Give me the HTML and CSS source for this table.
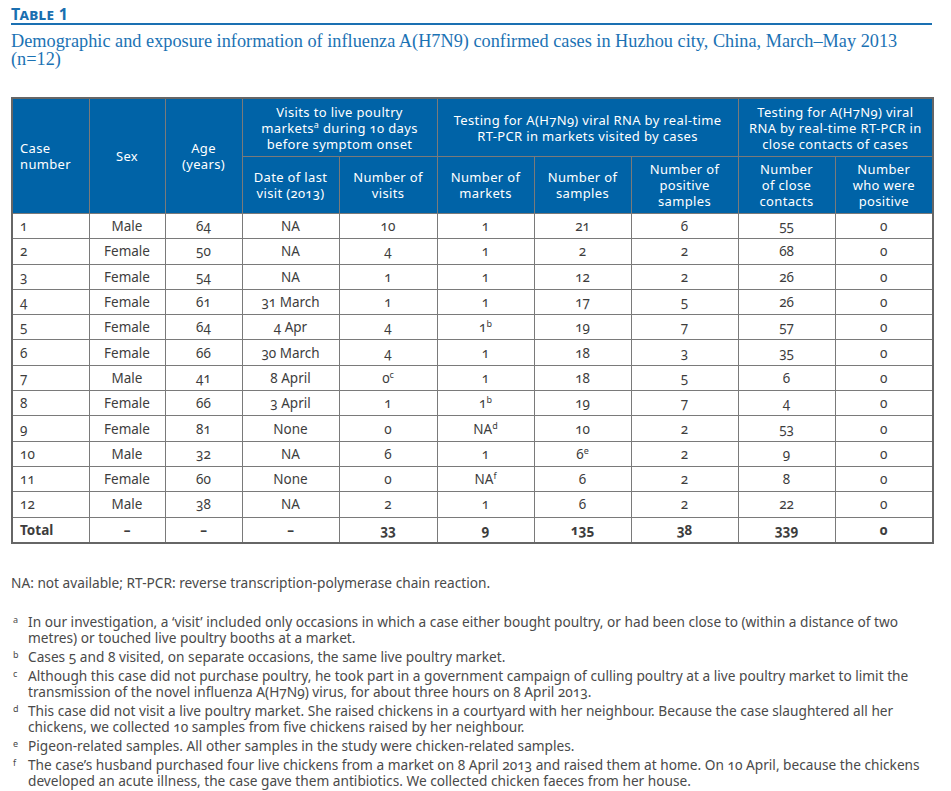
FILE: index.html
```html
<!DOCTYPE html>
<html>
<head>
<meta charset="utf-8">
<link rel="stylesheet" href="styles.css">
</head>
<body>
<div class="page">
  <h1 class="label">Table 1</h1>
  <p class="caption">Demographic and exposure information of influenza A(H7N9) confirmed cases in Huzhou city, China, March–May 2013 (n=12)</p>

  <table class="data">
    <colgroup>
      <col class="c77"><col class="c76"><col class="c77"><col class="c97"><col class="c98"><col class="c97"><col class="c97"><col class="c107"><col class="c97"><col class="c98">
    </colgroup>
    <thead>
      <tr class="h1">
        <th rowspan="2" class="left">Case<br>number</th>
        <th rowspan="2">Sex</th>
        <th rowspan="2">Age<br>(years)</th>
        <th colspan="2">Visits to live poultry<br>markets<sup>a</sup> during 10 days<br>before symptom onset</th>
        <th colspan="3">Testing for A(H7N9) viral RNA by real-time<br>RT-PCR in markets visited by cases</th>
        <th colspan="2">Testing for A(H7N9) viral<br>RNA by real-time RT-PCR in<br>close contacts of cases</th>
      </tr>
      <tr class="h2">
        <th>Date of last<br>visit (2013)</th>
        <th>Number of<br>visits</th>
        <th>Number of<br>markets</th>
        <th>Number of<br>samples</th>
        <th>Number of<br>positive<br>samples</th>
        <th>Number<br>of close<br>contacts</th>
        <th>Number<br>who were<br>positive</th>
      </tr>
    </thead>
    <tbody>
      <tr><td class="left">1</td><td>Male</td><td>64</td><td>NA</td><td>10</td><td>1</td><td>21</td><td>6</td><td>55</td><td>0</td></tr>
      <tr><td class="left">2</td><td>Female</td><td>50</td><td>NA</td><td>4</td><td>1</td><td>2</td><td>2</td><td>68</td><td>0</td></tr>
      <tr><td class="left">3</td><td>Female</td><td>54</td><td>NA</td><td>1</td><td>1</td><td>12</td><td>2</td><td>26</td><td>0</td></tr>
      <tr><td class="left">4</td><td>Female</td><td>61</td><td>31 March</td><td>1</td><td>1</td><td>17</td><td>5</td><td>26</td><td>0</td></tr>
      <tr><td class="left">5</td><td>Female</td><td>64</td><td>4 Apr</td><td>4</td><td>1<sup>b</sup></td><td>19</td><td>7</td><td>57</td><td>0</td></tr>
      <tr><td class="left">6</td><td>Female</td><td>66</td><td>30 March</td><td>4</td><td>1</td><td>18</td><td>3</td><td>35</td><td>0</td></tr>
      <tr><td class="left">7</td><td>Male</td><td>41</td><td>8 April</td><td>0<sup>c</sup></td><td>1</td><td>18</td><td>5</td><td>6</td><td>0</td></tr>
      <tr><td class="left">8</td><td>Female</td><td>66</td><td>3 April</td><td>1</td><td>1<sup>b</sup></td><td>19</td><td>7</td><td>4</td><td>0</td></tr>
      <tr><td class="left">9</td><td>Female</td><td>81</td><td>None</td><td>0</td><td>NA<sup>d</sup></td><td>10</td><td>2</td><td>53</td><td>0</td></tr>
      <tr><td class="left">10</td><td>Male</td><td>32</td><td>NA</td><td>6</td><td>1</td><td>6<sup>e</sup></td><td>2</td><td>9</td><td>0</td></tr>
      <tr><td class="left">11</td><td>Female</td><td>60</td><td>None</td><td>0</td><td>NA<sup>f</sup></td><td>6</td><td>2</td><td>8</td><td>0</td></tr>
      <tr><td class="left">12</td><td>Male</td><td>38</td><td>NA</td><td>2</td><td>1</td><td>6</td><td>2</td><td>22</td><td>0</td></tr>
      <tr class="total"><td class="left">Total</td><td>–</td><td>–</td><td>–</td><td>33</td><td>9</td><td>135</td><td>38</td><td>339</td><td>0</td></tr>
    </tbody>
  </table>

  <p class="abbr">NA: not available; RT-PCR: reverse transcription-polymerase chain reaction.</p>

  <ul class="notes">
    <li><span class="mark">a</span><span class="txt">In our investigation, a ‘visit’ included only occasions in which a case either bought poultry, or had been close to (within a distance of two metres) or touched live poultry booths at a market.</span></li>
    <li><span class="mark">b</span><span class="txt">Cases 5 and 8 visited, on separate occasions, the same live poultry market.</span></li>
    <li><span class="mark">c</span><span class="txt">Although this case did not purchase poultry, he took part in a government campaign of culling poultry at a live poultry market to limit the transmission of the novel influenza A(H7N9) virus, for about three hours on 8 April 2013.</span></li>
    <li><span class="mark">d</span><span class="txt">This case did not visit a live poultry market. She raised chickens in a courtyard with her neighbour. Because the case slaughtered all her chickens, we collected 10 samples from five chickens raised by her neighbour.</span></li>
    <li><span class="mark">e</span><span class="txt">Pigeon-related samples. All other samples in the study were chicken-related samples.</span></li>
    <li><span class="mark">f</span><span class="txt">The case’s husband purchased four live chickens from a market on 8 April 2013 and raised them at home. On 10 April, because the chickens developed an acute illness, the case gave them antibiotics. We collected chicken faeces from her house.</span></li>
  </ul>
</div>
</body>
</html>
```

FILE: styles.css
```css
html, body {
  margin: 0;
  padding: 0;
  background: #ffffff;
}

.page {
  padding: 6px 15px 0 11px;
  font-family: "Noto Sans", "Open Sans", sans-serif;
  font-variant-numeric: oldstyle-nums;
  color: #3d3d3d;
}

.label {
  margin: 0;
  font-size: 16px;
  line-height: 17px;
  font-weight: 700;
  font-variant: small-caps;
  letter-spacing: 0.3px;
  color: #1a6fb0;
  border-bottom: 2px solid #1a70b2;
  width: 921px;
}

.caption {
  margin: 7px 0 0 0;
  font-family: "Liberation Serif", "DejaVu Serif", serif;
  font-size: 18.3px;
  line-height: 18px;
  color: #1b72b4;
  width: 921px;
}

.data {
  margin-top: 29px;
  width: 921px;
  table-layout: fixed;
  border-collapse: collapse;
  border: 2px solid #666;
  font-size: 13.5px;
}

.c76 { width: 76px; }
.c77 { width: 77px; }
.c97 { width: 97px; }
.c98 { width: 98px; }
.c107 { width: 107px; }

.data th,
.data td {
  border: 1px solid #7a7a7a;
  text-align: center;
  vertical-align: middle;
  padding: 0 3px;
}

.data th {
  background: #0063a7;
  color: #ffffff;
  font-weight: 400;
  font-size: 13px;
  line-height: 16px;
  letter-spacing: 0.35px;
}

.data .h1 th { height: 57px; }
.data .h2 th { height: 56px; }

.data th.left,
.data td.left {
  text-align: left;
  padding-left: 7px;
}

.data td {
  height: 24.3px;
  line-height: 16px;
  color: #3d3d3d;
}

.data sup {
  font-size: 9px;
  line-height: 0;
  vertical-align: 5px;
}

.data .total td {
  font-weight: 700;
}

.abbr {
  margin: 31px 0 0 0;
  font-size: 13.7px;
  line-height: 16px;
  color: #4a4a4a;
}

.notes {
  list-style: none;
  margin: 23px 0 0 0;
  padding: 0;
  font-size: 13.7px;
  line-height: 16px;
  color: #4a4a4a;
  width: 921px;
}

.notes li {
  display: flex;
  margin-bottom: 3px;
}

.notes .mark {
  flex: 0 0 17px;
  font-size: 9px;
  line-height: 12px;
  padding-left: 2px;
  box-sizing: border-box;
}

.notes .txt {
  flex: 1;
}
```
